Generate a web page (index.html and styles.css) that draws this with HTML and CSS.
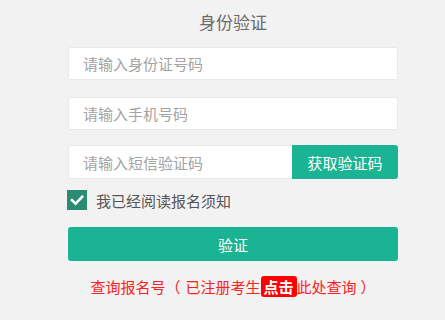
FILE: index.html
```html
<!DOCTYPE html>
<html lang="zh-CN">
<head>
<meta charset="utf-8">
<title>身份验证</title>
<link rel="stylesheet" href="styles.css">
</head>
<body>
<div class="panel">
  <h1 class="title">身份验证</h1>
  <input class="field" type="text" placeholder="请输入身份证号码">
  <input class="field field-second" type="text" placeholder="请输入手机号码">
  <div class="code-row">
    <input class="field code-input" type="text" placeholder="请输入短信验证码">
    <button class="code-btn" type="button">获取验证码</button>
  </div>
  <label class="agree">
    <span class="check"><svg width="20" height="20" viewBox="0 0 20 20"><path d="M5 10.2 L8.6 13.6 L15.2 6.8" fill="none" stroke="#fff" stroke-width="2.6" stroke-linecap="square"/></svg></span>
    <span class="agree-text">我已经阅读报名须知</span>
  </label>
  <button class="submit" type="button">验证</button>
  <p class="query">查询报名号<span class="paren-l">（</span>已注册考生<span class="hl">点击</span>此处查询<span class="paren-r">）</span></p>
</div>
</body>
</html>
```
FILE: styles.css
```css
* { box-sizing: border-box; }
html, body { margin: 0; padding: 0; }
body {
  background: #f2f2f2;
  font-family: "Noto Sans CJK SC", "Noto Sans", sans-serif;
  width: 445px;
  height: 320px;
  overflow: hidden;
}
.panel {
  width: 330px;
  margin-left: 68px;
  display: flex;
  flex-direction: column;
}
.title {
  margin: 0;
  height: 47px;
  line-height: 44px;
  font-size: 17px;
  font-weight: normal;
  color: #6a6a6a;
  text-align: center;
}
.field {
  display: block;
  width: 100%;
  height: 33px;
  border: 1px solid #e9e9e9;
  border-radius: 2px;
  background: #fff;
  padding: 0 14px;
  font-family: inherit;
  font-size: 15px;
  color: #555;
  outline: none;
}
.field::placeholder { color: #a3a3a3; }
.field-second { margin-top: 17px; }
.code-row {
  display: flex;
  margin-top: 15px;
  height: 34px;
}
.code-input {
  flex: 1;
  height: 34px;
  border-right: none;
  border-radius: 2px 0 0 2px;
}
.code-btn {
  width: 106px;
  height: 34px;
  border: none;
  border-radius: 0 3px 3px 0;
  background: #1ab394;
  color: #fff;
  font-family: inherit;
  font-size: 15px;
  padding: 0;
}
.agree {
  display: flex;
  align-items: center;
  margin-top: 11px;
  height: 20px;
  margin-left: -1px;
}
.check {
  width: 20px;
  height: 20px;
  background: #2a8c73;
  display: flex;
}
.agree-text {
  margin-left: 9px;
  font-size: 15px;
  color: #555;
}
.submit {
  margin-top: 17px;
  height: 34px;
  border: none;
  border-radius: 3px;
  background: #1ab394;
  color: #fff;
  font-family: inherit;
  font-size: 15px;
  padding: 0;
}
.query {
  margin: 16px 0 0;
  text-align: center;
  font-size: 15px;
  line-height: 20px;
  color: #ff2020;
}
.paren-l { margin-right: 5px; }
.paren-r { margin-left: 4px; }
.hl {
  background: #ff0000;
  color: #fff;
  border-radius: 3px;
  padding: 0 3px;
  font-weight: bold;
}
```
